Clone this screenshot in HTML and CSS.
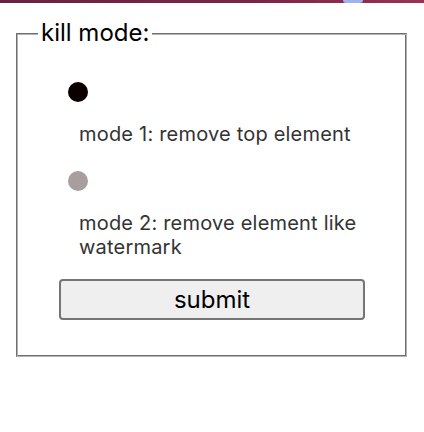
FILE: index.html
```html
<!DOCTYPE html>
<html>
<head>
<meta charset="utf-8">
<link rel="stylesheet" href="styles.css">
</head>
<body>
<div class="topbar"><span class="topbar-fill"></span><span class="topbar-blue"></span><span class="topbar-end"></span></div>
<div class="page">
  <form class="kill-form">
    <fieldset class="kill-set">
      <legend class="kill-legend">kill mode:</legend>
      <div class="option">
        <span class="dot dot-on"></span>
        <span class="option-label">mode 1: remove top element</span>
      </div>
      <div class="option">
        <span class="dot dot-off"></span>
        <span class="option-label">mode 2: remove element like watermark</span>
      </div>
      <button type="button" class="submit-btn">submit</button>
    </fieldset>
  </form>
</div>
</body>
</html>
```
FILE: styles.css
```css
html, body {
  margin: 0;
  padding: 0;
  background: #ffffff;
}
body {
  font-family: Inter, "Liberation Sans", sans-serif;
}
.topbar {
  display: flex;
  height: 3px;
  background: linear-gradient(to right, #6b2242, #7a2546 60%, #9b3254);
}
.topbar-fill {
  width: 343px;
}
.topbar-blue {
  width: 20px;
  height: 3px;
  background: #9fb4ec;
  border-radius: 0 0 6px 6px;
}
.topbar-end {
  flex: 1;
}
.page {
  padding: 16px 17px 0 16px;
}
.kill-form {
  margin: 0;
}
.kill-set {
  margin: 0;
  width: 391px;
  box-sizing: border-box;
  border: 1px solid;
  border-color: #6e6e6e #b3b3b3 #b3b3b3 #6e6e6e;
  box-shadow: inset 1px 1px 0 #b3b3b3, inset -1px -1px 0 #6e6e6e;
  padding: 35px 21px 36px 21px;
  display: flex;
  flex-direction: column;
  min-width: 0;
}
.kill-legend {
  font-size: 24px;
  line-height: 28px;
  padding: 0 3px;
  color: #000;
  background: #ffffff;
}
.option {
  display: flex;
  flex-direction: column;
  align-items: flex-start;
  margin-bottom: 20px;
}
.option + .option {
  margin-top: 5px;
}
.dot {
  width: 20px;
  height: 20px;
  border-radius: 50%;
  margin-left: 30px;
  margin-bottom: 20px;
}
.dot-on {
  background: #0b0000;
}
.dot-off {
  background: #a89e9e;
}
.option-label {
  font-size: 20px;
  line-height: 24px;
  letter-spacing: 0.2px;
  color: #333333;
  padding-left: 41px;
  max-width: 300px;
}
.submit-btn {
  margin-left: 21px;
  width: 306px;
  height: 41px;
  border: 2px solid #757575;
  border-radius: 4px;
  background: #efefef;
  font-family: Inter, "Liberation Sans", sans-serif;
  font-size: 24px;
  color: #000;
  padding: 0;
}
```
